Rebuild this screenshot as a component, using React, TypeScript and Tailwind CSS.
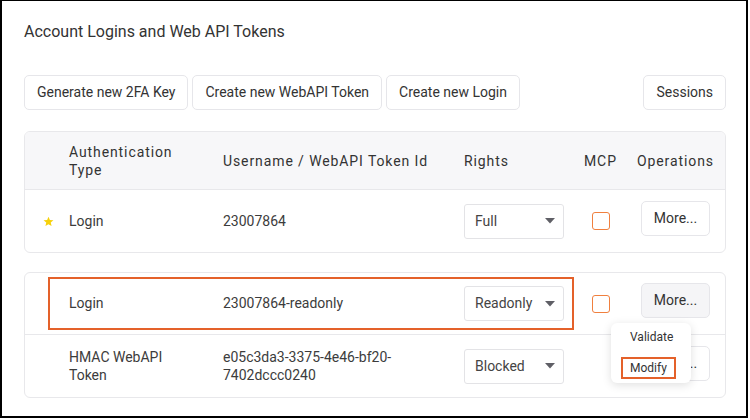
import React from "react"

const Caret = () => (
  <svg width="10" height="6" viewBox="0 0 10 6" className="shrink-0">
    <polygon points="0,0 10,0 5,5.5" fill="#5f5f66" />
  </svg>
)

const Star = () => (
  <svg width="11" height="11" viewBox="0 0 24 24">
    <polygon points="12,1.5 15,8.6 22.8,9.3 16.9,14.4 18.7,22 12,18 5.3,22 7.1,14.4 1.2,9.3 9,8.6" fill="#f6d10a" />
  </svg>
)

const Select = ({ value }: { value: string }) => (
  <div className="w-[100px] h-[35px] border border-[#e3e3e6] rounded-[3px] flex items-center justify-between pl-[10px] pr-[8px] text-[14px] text-[#444]">
    <span>{value}</span>
    <Caret />
  </div>
)

const Check = () => <div className="ml-[8px] w-[18px] h-[18px] border border-[#f0803f] rounded-[3px]" />

const More = ({ active }: { active?: boolean }) => (
  <div
    className={
      active
        ? "w-[69px] h-[35px] mb-[6px] border border-[#e6e6ea] rounded-[5px] bg-[#f5f5f7] flex items-center justify-center text-[14px] text-[#333]"
        : "w-[69px] h-[35px] mb-[6px] border border-[#e6e6ea] rounded-[5px] bg-white flex items-center justify-center text-[14px] text-[#333]"
    }
  >
    More...
  </div>
)

const cols = "grid grid-cols-[44px_154px_241px_120px_53px_1fr] items-center"

export default function App() {
  return (
    <div className="w-[750px] h-[420px] bg-white font-['Roboto',sans-serif]">
      <div className="w-[748px] h-[418px] border-t border-x-2 border-b-2 border-black pl-[22px] pr-[20px] pt-[19px]">
        <h1 className="text-[16px] leading-6 text-[#333]">Account Logins and Web API Tokens</h1>

        <div className="mt-[31px] flex justify-between">
          <div className="flex gap-1">
            {["Generate new 2FA Key", "Create new WebAPI Token", "Create new Login"].map((b) => (
              <div key={b} className="h-[35px] px-3 border border-[#e6e6ea] rounded-[5px] flex items-center text-[14px] text-[#333]">
                {b}
              </div>
            ))}
          </div>
          <div className="h-[35px] px-3 border border-[#e6e6ea] rounded-[5px] flex items-center text-[14px] text-[#333]">
            Sessions
          </div>
        </div>

        {/* first card */}
        <div className="mt-[21px] border border-[#e8e8eb] rounded-[6px] overflow-hidden">
          <div className={cols + " h-[58px] bg-[#f7f7f9] border-b border-[#e8e8eb] text-[14px] leading-[18px] tracking-[0.9px] text-[#333]"}>
            <div />
            <div>
              Authentication
              <br />
              Type
            </div>
            <div>Username / WebAPI Token Id</div>
            <div>Rights</div>
            <div>MCP</div>
            <div>Operations</div>
          </div>
          <div className={cols + " h-[62px] text-[14px] text-[#3c3c3c]"}>
            <div className="flex justify-center pl-[2px]">
              <Star />
            </div>
            <div>Login</div>
            <div>23007864</div>
            <div>
              <Select value="Full" />
            </div>
            <div>
              <Check />
            </div>
            <div className="pl-[4px]">
              <More />
            </div>
          </div>
        </div>

        {/* second card */}
        <div className="mt-[19px] border border-[#e8e8eb] rounded-[6px]">
          <div className={cols + " relative h-[62px] border-b border-[#e8e8eb] text-[14px] text-[#3c3c3c]"}>
            <div />
            <div>Login</div>
            <div>23007864-readonly</div>
            <div>
              <Select value="Readonly" />
            </div>
            <div>
              <Check />
            </div>
            <div className="pl-[4px]">
              <div className="relative w-[69px]">
                <More active />
                <div className="absolute z-10 left-[-30px] top-[40px] w-[80px] h-[60px] bg-white rounded-[6px] shadow-[0_2px_10px_rgba(0,0,0,0.13)] pl-[10px] pt-[3px] flex flex-col gap-[9px] text-[12px] text-[#333]">
                  <div className="self-start h-[22px] px-[7px] border-2 border-transparent flex items-center">Validate</div>
                  <div className="self-start h-[22px] px-[7px] border-2 border-[#e4612a] flex items-center">Modify</div>
                </div>
              </div>
            </div>
            <div className="absolute left-[23px] top-[4px] w-[526px] h-[53px] border-2 border-[#e4612a]" />
          </div>
          <div className={cols + " h-[62px] text-[14px] leading-[18px] text-[#3c3c3c]"}>
            <div />
            <div>
              HMAC WebAPI
              <br />
              Token
            </div>
            <div>
              e05c3da3-3375-4e46-bf20-
              <br />
              7402dccc0240
            </div>
            <div>
              <Select value="Blocked" />
            </div>
            <div />
            <div className="pl-[4px]">
              <More />
            </div>
          </div>
        </div>
      </div>
    </div>
  )
}
